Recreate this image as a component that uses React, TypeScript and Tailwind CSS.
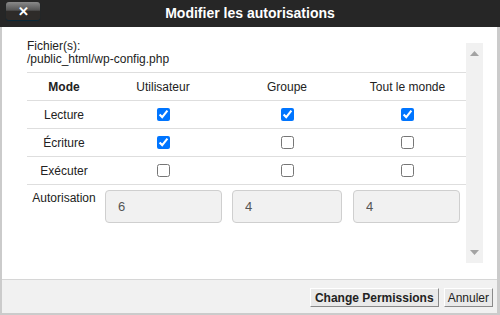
import React from 'react';

const cols = ['w-[74px]', 'w-[124px]', 'w-[124px]', 'w-[117px]'];

const rows: { label: string; checks: boolean[] }[] = [
  { label: 'Lecture', checks: [true, true, true] },
  { label: 'Écriture', checks: [true, false, false] },
  { label: 'Exécuter', checks: [false, false, false] },
];

const Check = ({ on }: { on: boolean }) => (
  <input
    type="checkbox"
    defaultChecked={on}
    className="m-0 h-[13px] w-[13px] accent-[#0075ff]"
  />
);

export default function App() {
  return (
    <div className="w-[500px] h-[315px] flex flex-col overflow-hidden bg-white text-[12px] text-[#222] font-['Liberation_Sans',Arial,sans-serif]">
      {/* Title bar */}
      <div className="relative h-[27px] shrink-0 bg-[#262626] flex items-center justify-center">
        <button className="absolute left-[6px] top-[2px] h-[18px] w-[34px] rounded-[3px] bg-[linear-gradient(#8a8a8a,#555_45%,#2e2b29_52%,#2e2b29)] shadow-[0_1px_1px_#0b2a3a] flex items-center justify-center text-white text-[13px] font-bold leading-none">
          ✕
        </button>
        <h1 className="text-white text-[14px] font-bold">Modifier les autorisations</h1>
      </div>

      {/* Body */}
      <div className="flex-1 flex flex-col border-l-2 border-r-[3px] border-b-2 border-[#cbcbcb]">
        <div className="h-[252px] pl-[25px] pr-[14px] pt-[14px]">
          <div className="flex h-[222px]">
            <div className="flex-1 -mt-[1px]">
              <div className="leading-[13px]">Fichier(s):</div>
              <div className="leading-[13px] mb-[6px]">/public_html/wp-config.php</div>

              <div className="border-t border-[#dedede]">
                <div className="flex h-[28px] items-center border-b border-[#dedede]">
                  <div className={`${cols[0]} text-center font-bold`}>Mode</div>
                  <div className={`${cols[1]} text-center`}>Utilisateur</div>
                  <div className={`${cols[2]} text-center`}>Groupe</div>
                  <div className={`${cols[3]} text-center`}>Tout le monde</div>
                </div>
                {rows.map((r) => (
                  <div key={r.label} className="flex h-[28px] items-center border-b border-[#dedede]">
                    <div className={`${cols[0]} text-center`}>{r.label}</div>
                    <div className={`${cols[1]} flex justify-center`}><Check on={r.checks[0]} /></div>
                    <div className={`${cols[2]} flex justify-center`}><Check on={r.checks[1]} /></div>
                    <div className={`${cols[3]} flex justify-center`}><Check on={r.checks[2]} /></div>
                  </div>
                ))}
                <div className="flex items-start pt-[5px]">
                  <div className={`${cols[0]} text-center leading-[14px] pt-[1px]`}>Autorisation</div>
                  <div className={cols[1]}>
                    <input readOnly value="6" className="ml-[4px] w-[117px] h-[33px] rounded-[4px] border border-[#cfcfcf] bg-[#f1f1f1] pl-[12px] text-[13px] text-[#555] outline-none" />
                  </div>
                  <div className={cols[2]}>
                    <input readOnly value="4" className="ml-[7px] w-[110px] h-[33px] rounded-[4px] border border-[#cfcfcf] bg-[#f1f1f1] pl-[12px] text-[13px] text-[#555] outline-none" />
                  </div>
                  <div className={cols[3]}>
                    <input readOnly value="4" className="ml-[4px] w-[107px] h-[33px] rounded-[4px] border border-[#cfcfcf] bg-[#f1f1f1] pl-[12px] text-[13px] text-[#555] outline-none" />
                  </div>
                </div>
              </div>
            </div>

            {/* Scrollbar */}
            <div className="w-[17px] mt-[2px] bg-[#f1f1f1] flex flex-col items-center justify-between py-[8px]">
              <svg width="9" height="5" viewBox="0 0 9 5"><path d="M4.5 0L9 5H0z" fill="#a3a3a3" /></svg>
              <svg width="9" height="5" viewBox="0 0 9 5"><path d="M0 0h9L4.5 5z" fill="#a3a3a3" /></svg>
            </div>
          </div>
        </div>

        {/* Footer */}
        <div className="flex-1 bg-[#f1f1f1] border-t border-[#d6d6d6] flex items-start justify-end gap-[5px] pt-[8px] pr-[4px]">
          <button className="h-[19px] px-[4px] bg-[#e9e9e9] border border-t-white border-l-white border-r-[#8a8a8a] border-b-[#8a8a8a] font-bold text-[12px] leading-none text-[#222]">
            Change Permissions
          </button>
          <button className="h-[19px] px-[3px] bg-[#e9e9e9] border border-t-white border-l-white border-r-[#8a8a8a] border-b-[#8a8a8a] text-[12px] leading-none text-[#222]">
            Annuler
          </button>
        </div>
      </div>
    </div>
  );
}
